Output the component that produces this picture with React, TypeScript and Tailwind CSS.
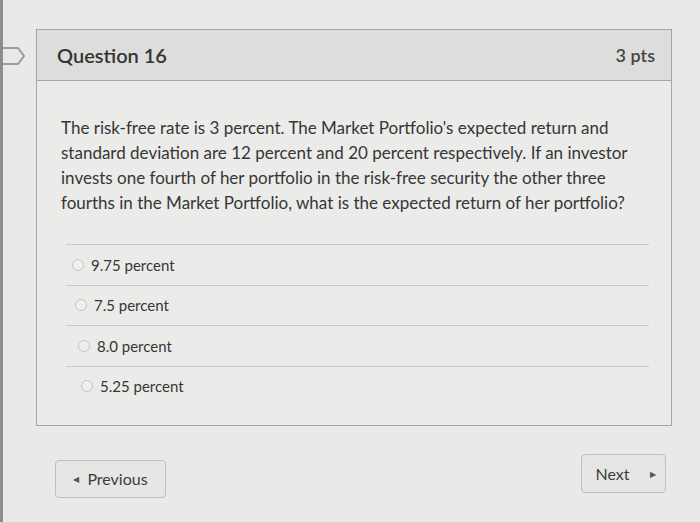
import React from 'react';

const answers = ['9.75 percent', '7.5 percent', '8.0 percent', '5.25 percent'];

function Radio() {
  return (
    <span className="w-[12px] h-[12px] rounded-full border border-[#c4c6c3] bg-[#efefed] shrink-0" />
  );
}

export default function App() {
  return (
    <div
      className="w-[700px] h-[522px] bg-[#e9eae7] text-[#363636] border-l-[3px] border-[#8e8f8d] relative overflow-hidden"
      style={{ fontFamily: 'Lato, "Open Sans", sans-serif' }}
    >
      {/* bookmark flag */}
      <svg className="absolute left-[-2px] top-[46px]" width="26" height="20" viewBox="0 0 26 20">
        <path d="M1 2 H17 L23 10 L17 18 H1 Z" fill="none" stroke="#9a9c99" strokeWidth="2" />
      </svg>

      <div className="pt-[29px] pl-[33px] pr-[28px]">
        <section className="border border-[#a5a6a4] bg-[#ebebe9]">
          <header className="h-[51px] pl-[20px] pr-[16px] flex items-center justify-between bg-[#dddedb] border-b border-[#a5a6a4]">
            <h2 className="text-[20px] font-semibold text-[#333]">Question 16</h2>
            <span className="text-[18px] font-semibold text-[#444]">3 pts</span>
          </header>

          <div className="pt-[34px] pl-[24px] pr-[10px] text-[17px] leading-[25px]">
            <p>
              The risk-free rate is 3 percent. The Market Portfolio's expected return and
              <br />
              standard deviation are 12 percent and 20 percent respectively. If an investor
              <br />
              invests one fourth of her portfolio in the risk-free security the other three
              <br />
              fourths in the Market Portfolio, what is the expected return of her portfolio?
            </p>
          </div>

          <div className="mt-[29px] ml-[29px] mr-[22px] pb-[19px]">
            {answers.map((a, i) => (
              <div
                key={a}
                className="h-[40.5px] border-t border-[#c9cac7] flex items-center gap-[7px] text-[15px]"
                style={{ paddingLeft: 6 + i * 3 }}
              >
                <Radio />
                <span>{a}</span>
              </div>
            ))}
          </div>
        </section>

        <div className="flex justify-between items-start mt-[28px] pl-[19px] pr-[6px]">
          <button className="mt-[6px] w-[111px] h-[38px] rounded-[4px] border border-[#bfc0be] bg-[#e6e7e4] flex items-center justify-center gap-[8px] text-[16px] text-[#3c3c3c]">
            <span className="text-[8px] text-[#555]">◀</span>
            Previous
          </button>
          <button className="w-[85px] h-[39px] rounded-[4px] border border-[#bfc0be] bg-[#e6e7e4] flex items-center justify-center gap-[20px] pl-[4px] text-[16px] text-[#3c3c3c]">
            Next
            <span className="text-[8px] text-[#555]">▶</span>
          </button>
        </div>
      </div>
    </div>
  );
}
